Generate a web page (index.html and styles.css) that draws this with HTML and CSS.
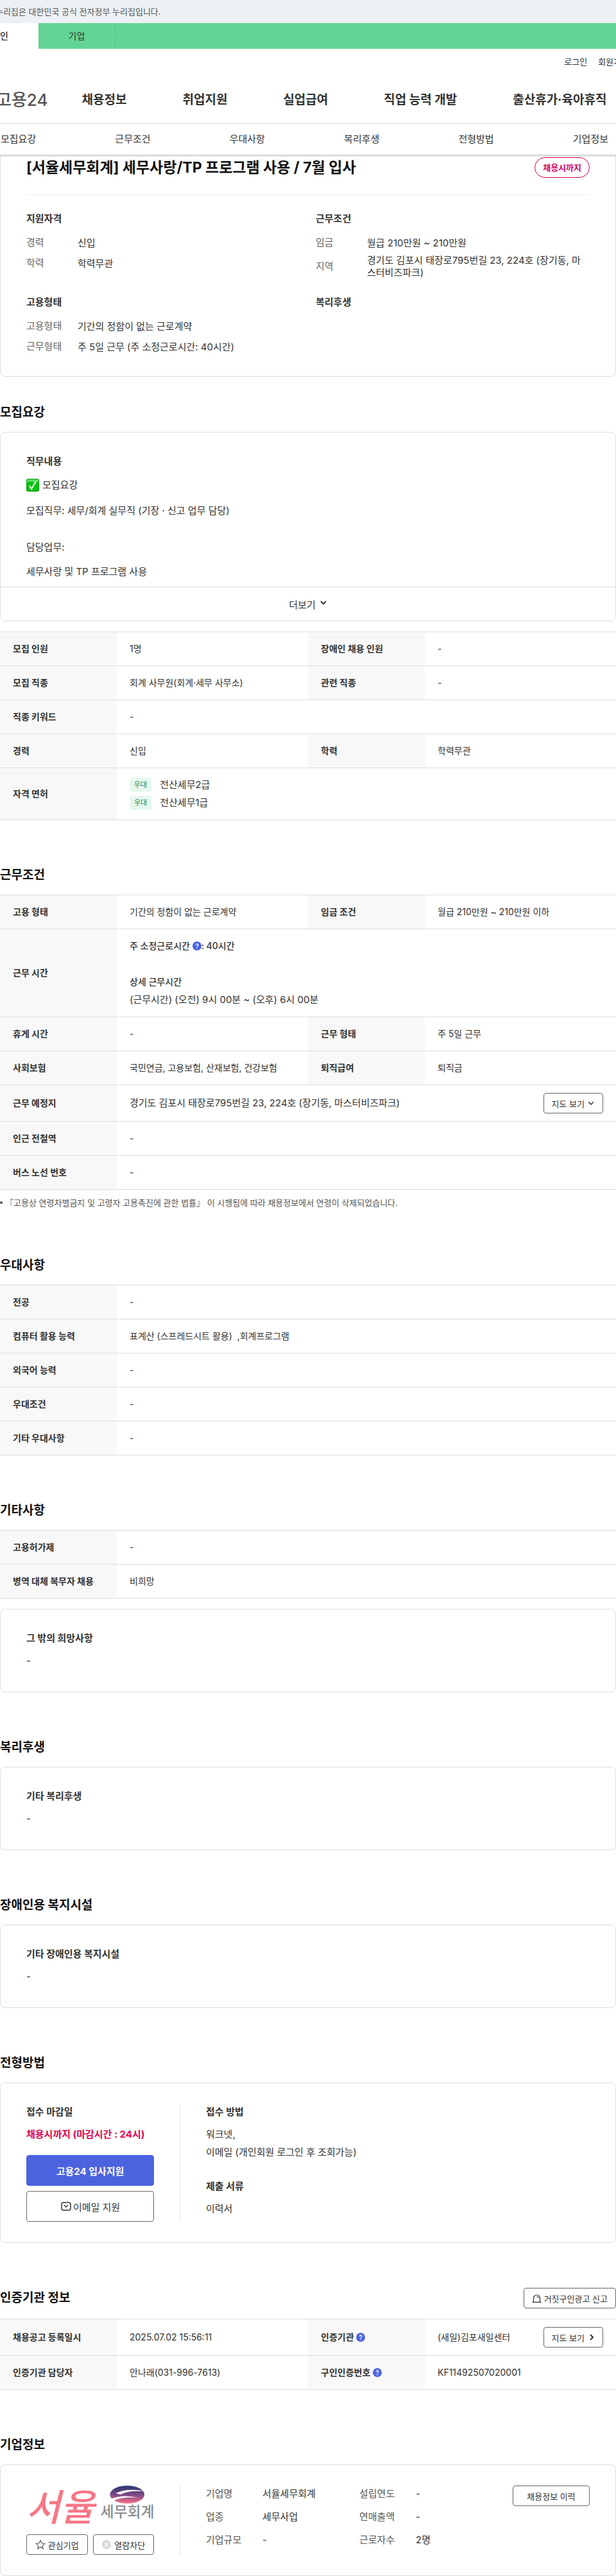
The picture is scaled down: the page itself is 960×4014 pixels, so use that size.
FILE: index.html
```html
<!DOCTYPE html>
<html lang="ko">
<head>
<meta charset="utf-8">
<meta name="viewport" content="width=device-width, initial-scale=1">
<title>채용정보 상세 - 고용24</title>
<link rel="stylesheet" href="styles.css">
</head>
<body>
<svg class="defs" width="0" height="0" aria-hidden="true">
  <symbol id="chev-down" viewBox="0 0 12 12"><path d="M2 4l4 4 4-4" fill="none" stroke="currentColor" stroke-width="1.5"/></symbol>
  <symbol id="help" viewBox="0 0 14 14"><circle cx="7" cy="7" r="7" fill="#4c63e0"/><path d="M5.2 5.6a1.8 1.8 0 1 1 2.7 1.5c-.6.4-.9.6-.9 1.200" fill="none" stroke="#fff" stroke-width="1.300"/><circle cx="7" cy="10.200" r=".85" fill="#fff"/></symbol>
</svg>
<div class="gov"><p class="gov-text">누리집은 대한민국 공식 전자정부 누리집입니다.</p></div>
<nav class="tabs" aria-label="회원 구분">
  <a class="tab tab-on" href="#">개인</a>
  <a class="tab" href="#">기업</a>
</nav>
<header class="header">
  <div class="util"><a href="#">로그인</a><a href="#">회원가입</a></div>
  <nav class="gnb" aria-label="주 메뉴">
    <a class="logo" href="#">고용24</a>
    <a href="#">채용정보</a><a href="#">취업지원</a><a href="#">실업급여</a><a href="#">직업 능력 개발</a><a href="#">출산휴가·육아휴직</a>
  </nav>
</header>
<nav class="anchors" aria-label="상세 메뉴">
  <a href="#recruit">모집요강</a><a href="#work">근무조건</a><a href="#prefer">우대사항</a><a href="#welfare">복리후생</a><a href="#apply">전형방법</a><a href="#company">기업정보</a>
</nav>
<main>
  <section class="summary">
    <div class="summary-head">
      <h1>[서율세무회계] 세무사랑/TP 프로그램 사용 / 7월 입사</h1>
      <span class="due">채용시까지</span>
    </div>
    <div class="summary-grid">
      <div>
        <h3>지원자격</h3>
        <dl><div><dt>경력</dt><dd>신입</dd></div><div><dt>학력</dt><dd>학력무관</dd></div></dl>
      </div>
      <div>
        <h3>근무조건</h3>
        <dl><div><dt>임금</dt><dd>월급 210만원 ~ 210만원</dd></div><div><dt>지역</dt><dd>경기도 김포시 태장로795번길 23, 224호 (장기동, 마스터비즈파크)</dd></div></dl>
      </div>
      <div>
        <h3>고용형태</h3>
        <dl><div><dt>고용형태</dt><dd>기간의 정함이 없는 근로계약</dd></div><div><dt>근무형태</dt><dd>주 5일 근무 (주 소정근로시간: 40시간)</dd></div></dl>
      </div>
      <div><h3>복리후생</h3></div>
    </div>
  </section>

  <section class="section section-first" id="recruit">
    <h2>모집요강</h2>
    <div class="card job">
      <div class="job-body">
        <h3>직무내용</h3>
        <p class="job-lead"><svg class="check" viewBox="0 0 20 20" role="img" aria-label="체크"><rect width="20" height="20" rx="3" fill="#0b9a14"/><rect x="1" y="1" width="18" height="18" rx="2" fill="#00c40c"/><path d="M1 3a2 2 0 0 1 2-2h14a2 2 0 0 1 2 2v2H1z" fill="#54dc5c"/><path d="M5 11l3 5L15 4" fill="none" stroke="#fff" stroke-width="2"/></svg>모집요강</p>
        <p>모집직무: 세무/회계 실무직 (기장 · 신고 업무 담당)</p>
        <p class="job-gap">담당업무:</p>
        <p>세무사랑 및 TP 프로그램 사용</p>
      </div>
      <button class="more" type="button">더보기<svg width="12" height="12" aria-hidden="true"><path d="M2 2l4 4 4-4" fill="none" stroke="currentColor" stroke-width="2"/></svg></button>
    </div>
    <table class="table table-gap">
      <colgroup><col class="c-th"><col class="c-td"><col class="c-th"><col class="c-td"></colgroup>
      <tr><th scope="row">모집 인원</th><td>1명</td><th scope="row">장애인 채용 인원</th><td>-</td></tr>
      <tr><th scope="row">모집 직종</th><td>회계 사무원(회계·세무 사무소)</td><th scope="row">관련 직종</th><td>-</td></tr>
      <tr><th scope="row">직종 키워드</th><td colspan="3">-</td></tr>
      <tr><th scope="row">경력</th><td>신입</td><th scope="row">학력</th><td>학력무관</td></tr>
      <tr><th scope="row">자격 면허</th><td colspan="3" class="lg">
        <div class="lic"><span class="tag">우대</span>전산세무2급</div>
        <div class="lic"><span class="tag">우대</span>전산세무1급</div></td></tr>
    </table>
  </section>

  <section class="section" id="work">
    <h2>근무조건</h2>
    <table class="table">
      <colgroup><col class="c-th"><col class="c-td"><col class="c-th"><col class="c-td"></colgroup>
      <tr><th scope="row">고용 형태</th><td>기간의 정함이 없는 근로계약</td><th scope="row">임금 조건</th><td>월급 210만원 ~ 210만원 이하</td></tr>
      <tr><th scope="row">근무 시간</th><td colspan="3">
        <strong>주 소정근로시간 <svg class="help" role="img" aria-label="도움말"><use href="#help"/></svg>: 40시간</strong><br><br>
        <strong>상세 근무시간</strong><br><span class="lg">(근무시간) (오전) 9시 00분 ~ (오후) 6시 00분</span></td></tr>
      <tr><th scope="row">휴게 시간</th><td>-</td><th scope="row">근무 형태</th><td>주 5일 근무</td></tr>
      <tr><th scope="row">사회보험</th><td>국민연금, 고용보험, 산재보험, 건강보험</td><th scope="row">퇴직급여</th><td>퇴직금</td></tr>
      <tr><th scope="row">근무 예정지</th><td colspan="3"><div class="split lg"><span>경기도 김포시 태장로795번길 23, 224호 (장기동, 마스터비즈파크)</span><button class="btn" type="button">지도 보기<svg width="12" height="12" aria-hidden="true"><use href="#chev-down"/></svg></button></div></td></tr>
      <tr><th scope="row">인근 전철역</th><td colspan="3">-</td></tr>
      <tr><th scope="row">버스 노선 번호</th><td colspan="3">-</td></tr>
    </table>
    <p class="note">『고용상 연령차별금지 및 고령자 고용촉진에 관한 법률』 이 시행됨에 따라 채용정보에서 연령이 삭제되었습니다.</p>
  </section>

  <section class="section" id="prefer">
    <h2>우대사항</h2>
    <table class="table">
      <colgroup><col class="c-th"><col></colgroup>
      <tr><th scope="row">전공</th><td>-</td></tr>
      <tr><th scope="row">컴퓨터 활용 능력</th><td>표계산 (스프레드시트 활용) &nbsp;,회계프로그램</td></tr>
      <tr><th scope="row">외국어 능력</th><td>-</td></tr>
      <tr><th scope="row">우대조건</th><td>-</td></tr>
      <tr><th scope="row">기타 우대사항</th><td>-</td></tr>
    </table>
  </section>

  <section class="section">
    <h2>기타사항</h2>
    <table class="table">
      <colgroup><col class="c-th"><col></colgroup>
      <tr><th scope="row">고용허가제</th><td>-</td></tr>
      <tr><th scope="row">병역 대체 복무자 채용</th><td>비희망</td></tr>
    </table>
    <div class="card text-card card-gap"><h3>그 밖의 희망사항</h3><p>-</p></div>
  </section>

  <section class="section" id="welfare">
    <h2>복리후생</h2>
    <div class="card text-card"><h3>기타 복리후생</h3><p>-</p></div>
  </section>

  <section class="section">
    <h2>장애인용 복지시설</h2>
    <div class="card text-card"><h3>기타 장애인용 복지시설</h3><p>-</p></div>
  </section>

  <section class="section" id="apply">
    <h2>전형방법</h2>
    <div class="card cols">
      <div class="side">
        <h3>접수 마감일</h3>
        <p class="deadline">채용시까지 (마감시간 : 24시)</p>
        <button class="big big-fill" type="button">고용24 입사지원</button>
        <button class="big" type="button"><svg width="18" height="18" viewBox="0 0 18 18" aria-hidden="true"><rect x="2" y="3" width="14" height="12" rx="3" fill="none" stroke="#333" stroke-width="1.500"/><path d="M6 7l3 3 3-3" fill="none" stroke="#333" stroke-width="1.500"/></svg>이메일 지원</button>
      </div>
      <div class="body">
        <h3>접수 방법</h3>
        <p>워크넷,<br>이메일 (개인회원 로그인 후 조회가능)</p>
        <h3 class="sub">제출 서류</h3>
        <p>이력서</p>
      </div>
    </div>
  </section>

  <section class="section">
    <div class="title-row">
      <h2>인증기관 정보</h2>
      <button class="btn" type="button"><svg width="15" height="15" viewBox="0 0 15 15" aria-hidden="true"><path d="M2.500 13V7a5 5 0 0 1 10 0v6M.5 13.300h14M7.500 4.500A2.500 2.500 0 0 1 10 7" fill="none" stroke="#333" stroke-width="1.200"/></svg>거짓구인광고 신고</button>
    </div>
    <table class="table">
      <colgroup><col class="c-th"><col class="c-td"><col class="c-th"><col class="c-td"></colgroup>
      <tr><th scope="row">채용공고 등록일시</th><td>2025.07.02 15:56:11</td><th scope="row">인증기관 <svg class="help" role="img" aria-label="도움말"><use href="#help"/></svg></th><td><div class="split"><span>(새일)김포새일센터</span><button class="btn" type="button">지도 보기<svg width="12" height="12" aria-hidden="true"><path d="M5 2l4 4-4 4" fill="none" stroke="currentColor" stroke-width="2"/></svg></button></div></td></tr>
      <tr><th scope="row">인증기관 담당자</th><td>안나래(031-996-7613)</td><th scope="row">구인인증번호 <svg class="help" role="img" aria-label="도움말"><use href="#help"/></svg></th><td>KF11492507020001</td></tr>
    </table>
  </section>

  <section class="section" id="company">
    <h2>기업정보</h2>
    <div class="card cols">
      <div class="side">
        <svg class="brand" viewBox="0 0 200 64" role="img" aria-label="서율세무회계">
          <defs><linearGradient id="orb" x1="0" y1="0" x2="0" y2="1"><stop offset="0" stop-color="#24366f"/><stop offset=".5" stop-color="#7a4a86"/><stop offset="1" stop-color="#f97187"/></linearGradient></defs>
          <text class="brand-main" x="0" y="55">서율</text>
          <ellipse cx="158" cy="14" rx="27" ry="14" fill="url(#orb)"/>
          <path d="M140 12q20-9 45-3-24-2-38 5zM132 21q20-8 42-2-22-2-38 5z" fill="#fff"/>
          <text class="brand-sub" x="116" y="49">세무회계</text>
        </svg>
        <div class="pair">
          <button class="btn" type="button"><svg width="16" height="16" viewBox="0 0 16 16" aria-hidden="true"><path d="M8 1.500l2 4.300 4.700.6-3.500 3.200.9 4.700L8 12l-4.100 2.300.9-4.700L1.300 6.400 6 5.800z" fill="none" stroke="#555" stroke-width="1.200"/></svg>관심기업</button>
          <button class="btn" type="button"><svg width="16" height="16" viewBox="0 0 16 16" aria-hidden="true"><circle cx="8" cy="8" r="7" fill="#d8d8d8"/><path d="M5 5l6 6M11 5l-6 6" stroke="#fff" stroke-width="1.200"/></svg>열람차단</button>
        </div>
      </div>
      <div class="body corp">
        <dl class="facts">
          <dt>기업명</dt><dd>서율세무회계</dd><dt>설립연도</dt><dd>-</dd>
          <dt>업종</dt><dd>세무사업</dd><dt>연매출액</dt><dd>-</dd>
          <dt>기업규모</dt><dd>-</dd><dt>근로자수</dt><dd>2명</dd>
        </dl>
        <button class="btn btn-wide" type="button">채용정보 이력</button>
      </div>
    </div>
  </section>
</main>
</body>
</html>
```
FILE: styles.css
```css
* { box-sizing: border-box; }
body {
  margin: 0;
  overflow-x: hidden;
  background: #fff;
  color: #333;
  font-family: Inter, "Noto Sans CJK KR", "Noto Sans", sans-serif;
  font-size: 15px;
  line-height: 28px;
}
h1, h2, h3, p, dl, dd { margin: 0; }
a { color: inherit; text-decoration: none; }
button { font-family: inherit; cursor: pointer; color: #333; }
.defs { position: absolute; }

.gov { height: 36px; background: #edf1f5; overflow: hidden; }
.gov-text { margin-left: -7px; font-size: 13px; line-height: 36px; color: #555; }

.tabs { display: flex; background: #62d594; margin-left: -60px; }
.tab {
  width: 120px;
  line-height: 40px;
  font-size: 14px;
  text-align: center;
  border-right: 1px solid #56c888;
}
.tab-on { background: #fff; border-right: 0; font-weight: 500; }

.header { border-bottom: 1px solid #e9e9e9; overflow: hidden; }
.util {
  display: flex;
  gap: 17px;
  padding: 8px 0 0;
  margin-right: -20px;
  justify-content: flex-end;
  font-size: 13px;
  line-height: 24px;
  white-space: nowrap;
}
.gnb {
  display: flex;
  align-items: center;
  gap: 87px;
  height: 76px;
  margin: 8px 0 0 -6px;
  padding-top: 3px;
  font-size: 19px;
  font-weight: 700;
  white-space: nowrap;
}
.logo { flex: 0 0 80px; margin-right: -34px; font-size: 26px; font-weight: 500; color: #555; }

.anchors {
  position: relative;
  display: flex;
  justify-content: space-between;
  padding: 0 12px 0 1px;
  line-height: 48px;
  background: #fff;
  border-bottom: 1px solid #ccc;
  box-shadow: 0 1px 3px rgba(0, 0, 0, .2);
}

.summary {
  border: 1px solid #ddd;
  border-top: 0;
  border-radius: 0 0 8px 8px;
  padding: 1px 40px 32px;
}
.summary-head {
  display: flex;
  justify-content: space-between;
  align-items: center;
  padding-bottom: 24px;
  border-bottom: 1px solid #eaeaea;
}
h1 { font-size: 23px; line-height: 36px; color: #111; }
.due {
  padding: 0 12px;
  border: 1px solid #d8005b;
  border-radius: 16px;
  font-size: 13px;
  font-weight: 700;
  line-height: 30px;
  color: #d8005b;
}
h3 { font-size: 15px; line-height: 26px; font-weight: 700; }
.summary-grid {
  display: grid;
  grid-template-columns: 1fr 1fr;
  gap: 24px;
  padding-top: 24px;
}
.summary-grid dl { display: flex; flex-direction: column; gap: 4px; margin-top: 10px; }
.summary-grid dl div { display: flex; align-items: center; min-height: 28px; }
.summary-grid dt { flex: 0 0 80px; color: #666; line-height: 24px; }
.summary-grid dd { padding-right: 8px; line-height: 19px; word-break: break-all; }

.section { margin-top: 70px; }
.section-first { margin-top: 40px; }
h2 { font-size: 19px; line-height: 32px; color: #111; margin-bottom: 14px; }
.title-row { display: flex; justify-content: space-between; align-items: center; margin-bottom: 16px; }
.title-row h2 { margin: 0; }

.card { border: 1px solid #ddd; border-radius: 8px; }
.card h3 { margin-bottom: 8px; }
.card-gap { margin-top: 16px; }
.text-card { padding: 32px 40px 34px; }
.job-body { padding: 32px 40px 9px; }
.job-body p + p { margin-top: 10px; }
.job-body p + .job-gap { margin-top: 29px; }
.job-lead { display: flex; align-items: center; gap: 5px; line-height: 32px; }
.check { width: 20px; height: 20px; }
.more {
  display: flex;
  align-items: center;
  justify-content: center;
  gap: 6px;
  width: 100%;
  height: 53px;
  border: 0;
  border-top: 1px solid #ddd;
  border-radius: 0 0 8px 8px;
  background: #fff;
  font-size: 15px;
}

.table { width: 100%; border-collapse: separate; border-spacing: 0; table-layout: fixed; border-top: 1px solid #ddd; font-size: 14px; }
.table-gap { margin-top: 16px; }
.c-th { width: 182px; }
.table th, .table td { padding: 12px 20px; border-bottom: 1px solid #ddd; text-align: left; vertical-align: middle; }
.table th { background: #f8f8f8; font-weight: 700; white-space: nowrap; }
.table strong { font-weight: 500; }
.table .lg { font-size: 15px; }
.lic { display: flex; align-items: center; gap: 13px; }
.tag {
  padding: 0 7px;
  border-radius: 4px;
  background: #e6f8ee;
  color: #218a56;
  font-size: 11px;
  line-height: 22px;
}
.help { width: 14px; height: 14px; vertical-align: -2px; }
.split { display: flex; align-items: center; justify-content: space-between; }
.note {
  display: flex;
  align-items: center;
  gap: 4px;
  padding-top: 8px;
  font-size: 13px;
  line-height: 24px;
  color: #555;
}
.note::before { content: ""; width: 4px; height: 4px; border-radius: 2px; background: #555; }

.btn {
  display: inline-flex;
  align-items: center;
  justify-content: center;
  gap: 4px;
  height: 32px;
  padding: 0 12px;
  border: 1px solid #666;
  border-radius: 4px;
  background: #fff;
  font-size: 13px;
  white-space: nowrap;
}
.btn-wide { min-width: 120px; }

.cols { display: flex; padding: 32px 40px; }
.side { flex: 0 0 240px; padding-right: 40px; border-right: 1px solid #e6e6e6; }
.body { flex: 1; padding-left: 40px; }
.deadline { margin-bottom: 18px; font-weight: 700; color: #e5004f; white-space: nowrap; }
.big {
  display: flex;
  align-items: center;
  justify-content: center;
  gap: 2px;
  width: 100%;
  height: 48px;
  border: 1px solid #666;
  border-radius: 4px;
  background: #fff;
  font-size: 15px;
}
.big-fill { margin-bottom: 8px; border-color: #4c63e0; background: #4c63e0; color: #fff; font-weight: 700; }
.card .sub { margin-top: 26px; }

.brand { display: block; width: 100%; height: 64px; overflow: visible; }
.brand-main { font-size: 58px; font-weight: 500; font-style: italic; fill: #f67786; }
.brand-sub { font-size: 23px; font-weight: 500; fill: #8a8c90; }
.pair { display: grid; grid-template-columns: 1fr 1fr; gap: 8px; margin-top: 12px; }
.corp { display: flex; justify-content: space-between; align-items: flex-start; }
.facts { display: grid; grid-template-columns: 88px 151px 88px auto; row-gap: 10px; line-height: 26px; }
.facts dt { color: #555; }
.pair .btn { padding: 0; }
```
